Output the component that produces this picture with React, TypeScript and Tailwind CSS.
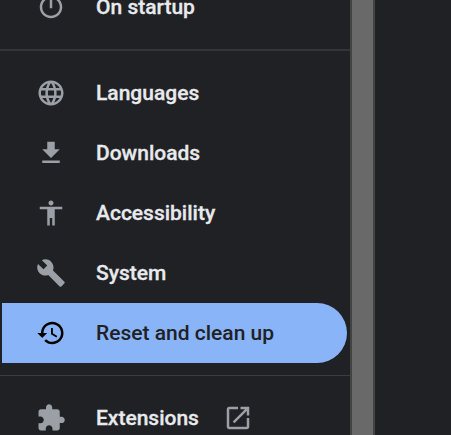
import type { ReactNode } from "react";

const icons = {
  power:
    "M13 3h-2v10h2V3zm4.83 2.17l-1.42 1.42C17.99 7.86 19 9.81 19 12c0 3.87-3.13 7-7 7s-7-3.13-7-7c0-2.19 1.01-4.14 2.58-5.42L6.17 5.17C4.23 6.82 3 9.26 3 12c0 4.97 4.03 9 9 9s9-4.03 9-9c0-2.74-1.23-5.18-3.17-6.83z",
  globe:
    "M11.99 2C6.47 2 2 6.48 2 12s4.47 10 9.99 10C17.52 22 22 17.52 22 12S17.52 2 11.99 2zm6.93 6h-2.95c-.32-1.25-.78-2.45-1.38-3.56 1.84.63 3.37 1.91 4.33 3.56zM12 4.04c.83 1.2 1.48 2.53 1.91 3.96h-3.82c.43-1.43 1.08-2.76 1.91-3.96zM4.26 14C4.1 13.36 4 12.69 4 12s.1-1.36.26-2h3.38c-.08.66-.14 1.32-.14 2s.06 1.34.14 2H4.26zm.82 2h2.95c.32 1.25.78 2.45 1.38 3.56-1.84-.63-3.37-1.9-4.33-3.56zm2.95-8H5.08c.96-1.66 2.49-2.93 4.33-3.56C8.81 5.55 8.35 6.75 8.03 8zM12 19.96c-.83-1.2-1.48-2.53-1.91-3.96h3.82c-.43 1.43-1.08 2.76-1.91 3.96zM14.34 14H9.66c-.09-.66-.16-1.32-.16-2s.07-1.35.16-2h4.68c.09.65.16 1.32.16 2s-.07 1.34-.16 2zm.25 5.56c.6-1.11 1.06-2.31 1.38-3.56h2.95c-.96 1.65-2.49 2.93-4.33 3.56zM16.36 14c.08-.66.14-1.32.14-2s-.06-1.34-.14-2h3.38c.16.64.26 1.31.26 2s-.1 1.36-.26 2h-3.38z",
  download: "M19 9h-4V3H9v6H5l7 7 7-7zM5 18v2h14v-2H5z",
  accessibility:
    "M12 2c1.1 0 2 .9 2 2s-.9 2-2 2-2-.9-2-2 .9-2 2-2zm9 7h-6v13h-2v-6h-2v6H9V9H3V7h18v2z",
  build:
    "M22.7 19l-9.1-9.1c.9-2.3.4-5-1.5-6.9-2-2-5-2.4-7.4-1.3L9 6 6 9 1.6 4.7C.4 7.1.9 10.1 2.9 12.1c1.9 1.9 4.6 2.4 6.9 1.5l9.1 9.1c.4.4 1 .4 1.4 0l2.3-2.3c.5-.4.5-1.1.1-1.4z",
  restore:
    "M13 3c-4.97 0-9 4.03-9 9H1l3.89 3.89.07.14L9 12H6c0-3.87 3.13-7 7-7s7 3.13 7 7-3.13 7-7 7c-1.93 0-3.68-.79-4.94-2.06l-1.42 1.42C8.27 19.99 10.51 21 13 21c4.97 0 9-4.03 9-9s-4.03-9-9-9zm-1 5v5l4.28 2.54.72-1.21-3.5-2.08V8H12z",
  extension:
    "M20.5 11H19V7c0-1.1-.9-2-2-2h-4V3.5C13 2.12 11.88 1 10.5 1S8 2.12 8 3.5V5H4c-1.1 0-1.99.9-1.99 2v3.8H3.5c1.49 0 2.7 1.21 2.7 2.7s-1.21 2.7-2.7 2.7H2V20c0 1.1.9 2 2 2h3.8v-1.5c0-1.49 1.21-2.7 2.7-2.7 1.49 0 2.7 1.21 2.7 2.7V22H17c1.1 0 2-.9 2-2v-4h1.5c1.38 0 2.5-1.12 2.5-2.5S21.88 11 20.5 11z",
  openInNew:
    "M19 19H5V5h7V3H5c-1.11 0-2 .9-2 2v14c0 1.1.89 2 2 2h14c1.1 0 2-.9 2-2v-7h-2v7zM14 3v2h3.59l-9.83 9.83 1.41 1.41L19 6.41V10h2V3h-7z",
};

function Icon({ name }: { name: keyof typeof icons }) {
  return (
    <svg viewBox="0 0 24 24" className="size-[30px] shrink-0 fill-current">
      <path d={icons[name]} />
    </svg>
  );
}

interface MenuItemProps {
  icon: keyof typeof icons;
  label: string;
  selected?: boolean;
  children?: ReactNode;
}

function MenuItem({ icon, label, selected, children }: MenuItemProps) {
  return (
    <a
      className={`ml-0.5 mr-[3px] flex h-[60px] shrink-0 items-center rounded-r-full pl-[34px] ${selected ? "bg-[#8ab4f8] text-black" : "text-[#9aa0a6]"}`}
    >
      <Icon name={icon} />
      <span
        className={`ml-[30px] whitespace-nowrap pt-0.5 ${selected ? "text-[#202124]" : "text-[#e8eaed] [-webkit-text-stroke:0.3px_#e8eaed]"}`}
      >
        {label}
      </span>
      {children}
    </a>
  );
}

export default function App() {
  return (
    <div className="flex h-screen overflow-hidden bg-[#202124] font-['Roboto',sans-serif] text-[21px] font-medium">
      <nav className="-mt-[23px] flex w-[350px] shrink-0 flex-col">
        <MenuItem icon="power" label="On startup" />
        <div className="my-3 h-0.5 shrink-0 bg-[#343538]" />
        <MenuItem icon="globe" label="Languages" />
        <MenuItem icon="download" label="Downloads" />
        <MenuItem icon="accessibility" label="Accessibility" />
        <MenuItem icon="build" label="System" />
        <MenuItem icon="restore" label="Reset and clean up" selected />
        <div className="my-3 h-px shrink-0 bg-[#3c3d40]" />
        <MenuItem icon="extension" label="Extensions">
          <span className="ml-6">
            <Icon name="openInNew" />
          </span>
        </MenuItem>
      </nav>
      {/* Scrollbar */}
      <div className="w-[25px] shrink-0 border-x-2 border-[#434442] bg-[#696969]" />
    </div>
  );
}
